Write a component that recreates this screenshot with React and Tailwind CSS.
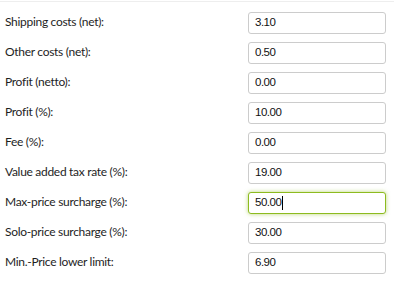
import React from 'react';

const rows = [
  { label: 'Shipping costs (net):', value: '3.10' },
  { label: 'Other costs (net):', value: '0.50' },
  { label: 'Profit (netto):', value: '0.00' },
  { label: 'Profit (%):', value: '10.00' },
  { label: 'Fee (%):', value: '0.00' },
  { label: 'Value added tax rate (%):', value: '19.00' },
  { label: 'Max-price surcharge (%):', value: '50.00', focused: true },
  { label: 'Solo-price surcharge (%):', value: '30.00' },
  { label: 'Min.-Price lower limit:', value: '6.90' },
];

const Field = ({ value, focused }) => (
  <div
    className={`flex items-center h-[22px] w-[138px] rounded-[3px] border bg-white pl-[6px] text-[11.5px] text-[#111111] font-['Liberation_Sans',sans-serif] ${
      focused
        ? 'border-[#8dbb1f] shadow-[0_0_4px_rgba(141,187,31,0.6)]'
        : 'border-[#cccccc]'
    }`}
  >
    <span className="tracking-[-0.5px]">{value}</span>
    {focused && <span className="ml-[1px] h-[14px] w-px bg-black" />}
  </div>
);

export default function App() {
  return (
    <div className="w-[394px] h-[284px] bg-white pt-px">
      <div className="border-t border-[#eeeeee] pt-[10px]">
        {rows.map((row) => (
          <div key={row.label} className="flex h-[30px]">
            <div className="w-[248px] pl-[5px] pt-[2px] text-[12px] leading-[16px] tracking-[-0.3px] text-[#1e1e1e] font-['Lato',sans-serif]">
              {row.label}
            </div>
            <Field value={row.value} focused={row.focused} />
          </div>
        ))}
      </div>
    </div>
  );
}
